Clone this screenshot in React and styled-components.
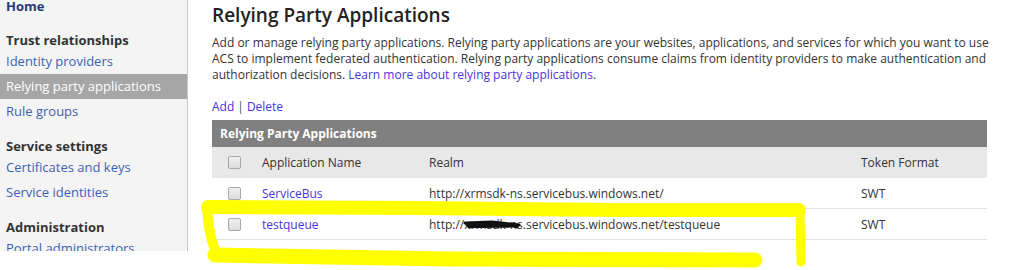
import styled, { createGlobalStyle } from 'styled-components';

const GlobalStyle = createGlobalStyle`
  body {
    margin: 0;
    background: #fff;
    font-family: 'Open Sans', 'Noto Sans', sans-serif;
    color: #333;
  }
`;

const nav = [
  { type: 'home', label: 'Home' },
  { type: 'head', label: 'Trust relationships' },
  { type: 'link', label: 'Identity providers' },
  { type: 'link', label: 'Relying party applications', active: true },
  { type: 'link', label: 'Rule groups' },
  { type: 'head', label: 'Service settings' },
  { type: 'link', label: 'Certificates and keys' },
  { type: 'link', label: 'Service identities' },
  { type: 'head', label: 'Administration' },
  { type: 'link', label: 'Portal administrators' },
];

const apps = [
  { name: 'ServiceBus', realm: 'http://xrmsdk-ns.servicebus.windows.net/', token: 'SWT' },
  { name: 'testqueue', realm: 'http://xrmsdk-ns.servicebus.windows.net/testqueue', token: 'SWT', hidden: true },
];

const App = () => {
  return (
    <>
      <GlobalStyle />
      <Page>
        <Sidebar>
          {nav.map((item) =>
            item.type === 'link' ? (
              <NavLink key={item.label} $active={item.active}>
                {item.label}
              </NavLink>
            ) : (
              <NavHead key={item.label} $home={item.type === 'home'}>
                {item.label}
              </NavHead>
            )
          )}
        </Sidebar>
        <Main>
          <Title>Relying Party Applications</Title>
          <Intro>
            Add or manage relying party applications. Relying party applications are your websites, applications, and
            services for which you want to use ACS to implement federated authentication. Relying party applications
            consume claims from identity providers to make authentication and authorization decisions.{' '}
            <Link>Learn more about relying party applications</Link>.
          </Intro>
          <Actions>
            <Link>Add</Link>
            <Sep>|</Sep>
            <Link>Delete</Link>
          </Actions>
          <Table>
            <Caption>Relying Party Applications</Caption>
            <Row $head>
              <Check />
              <span>Application Name</span>
              <span>Realm</span>
              <span>Token Format</span>
            </Row>
            {apps.map((app) => (
              <Row key={app.name}>
                <Check />
                <Link>{app.name}</Link>
                <Realm>
                  {app.realm}
                  {app.hidden && (
                    <Scribble viewBox="0 0 60 10">
                      <path d="M2 4 L30 3 L58 6 M4 6 L40 5 L56 8 M6 8 L50 7" stroke="#111" strokeWidth="3" fill="none" strokeLinecap="round" />
                    </Scribble>
                  )}
                </Realm>
                <span>{app.token}</span>
              </Row>
            ))}
          </Table>
        </Main>
        <Marker viewBox="0 0 1024 270">
          <g stroke="#ffff00" fill="none" strokeLinecap="round" strokeLinejoin="round">
            <path d="M208 207 L420 208 L620 210 L799 210" strokeWidth="14" />
            <path d="M800 208 L801 262" strokeWidth="9" />
            <path d="M207 208 Q209 238 217 254" strokeWidth="10" />
            <path d="M215 255 L450 259 L755 260" strokeWidth="15" />
          </g>
        </Marker>
      </Page>
    </>
  );
};

const Page = styled.div`
  display: grid;
  grid-template-columns: 188px 1fr;
  height: 270px;
  overflow: hidden;
  position: relative;
`;

const Sidebar = styled.nav`
  height: 251px;
  overflow: hidden;
  background: #f4f4f4;
  border-right: 1px solid #c8c8c8;
  display: flex;
  flex-direction: column;
  font-size: 13px;
`;

const NavHead = styled.div`
  font-weight: 700;
  color: ${(p) => (p.$home ? '#1f3c7a' : '#333')};
  margin-top: ${(p) => (p.$home ? '-3px' : '0')};
  padding: ${(p) => (p.$home ? '0 6px 3px' : '13px 6px 0')};
  line-height: 18px;
`;

const NavLink = styled.div`
  color: ${(p) => (p.$active ? '#fff' : '#3d62b0')};
  background: ${(p) => (p.$active ? '#a6a6a6' : 'transparent')};
  padding: 3px 6px;
  line-height: 19px;
`;

const Main = styled.main`
  padding: 2px 0 0 24px;
`;

const Title = styled.h1`
  margin: 0;
  font-size: 19px;
  font-weight: 600;
  color: #222;
  line-height: 26px;
`;

const Intro = styled.p`
  margin: 7px 0 0;
  width: 780px;
  font-size: 12px;
  line-height: 16px;
`;

const Link = styled.a`
  color: #4b32e0;
  cursor: pointer;
`;

const Actions = styled.div`
  margin-top: 16px;
  font-size: 12px;
  line-height: 16px;
  display: flex;
  gap: 3px;
`;

const Sep = styled.span`
  color: #555;
`;

const Table = styled.div`
  margin-top: 5px;
  width: 775px;
  font-size: 12px;
`;

const Caption = styled.div`
  background: #808080;
  color: #fff;
  font-weight: 700;
  height: 27px;
  line-height: 27px;
  padding-left: 8px;
`;

const Row = styled.div`
  display: grid;
  grid-template-columns: 50px 167px 432px 1fr;
  align-items: center;
  height: ${(p) => (p.$head ? '31px' : '30px')};
  background: ${(p) => (p.$head ? '#e8e8e8' : '#fff')};
  border-bottom: ${(p) => (p.$head ? 'none' : '1px solid #e2e2e2')};
  color: #333;
`;

const Check = styled.span`
  width: 11px;
  height: 11px;
  margin-left: 16px;
  border: 1px solid #a8a8a8;
  border-radius: 2px;
  background: linear-gradient(#f0f0f0, #dcdcdc);
`;

const Realm = styled.span`
  position: relative;
`;

const Scribble = styled.svg`
  position: absolute;
  left: 34px;
  top: 3px;
  width: 58px;
  height: 10px;
`;

const Marker = styled.svg`
  position: absolute;
  left: 0;
  top: 0;
  width: 1024px;
  height: 270px;
  pointer-events: none;
`;

export default App;
